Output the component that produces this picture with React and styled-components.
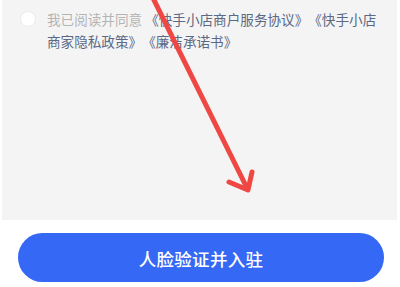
import React from "react"
import styled, { createGlobalStyle } from "styled-components"

const Global = createGlobalStyle`
  body {
    margin: 0;
    background: #fff;
    font-family: "Noto Sans CJK SC", "Noto Sans", sans-serif;
  }
`

const Page = styled.div`
  position: relative;
  width: 400px;
  height: 287px;
  overflow: hidden;
  background: #fff;
  display: flex;
  flex-direction: column;
`

const Panel = styled.div`
  height: 220px;
  margin: 0 3px 0 2px;
  padding: 9px 4px 0 18px;
  box-sizing: border-box;
  background: #f4f4f4;
`

const Agreement = styled.div`
  display: flex;
  align-items: flex-start;
  gap: 11px;
`

const Check = styled.span`
  flex: none;
  width: 16px;
  height: 16px;
  margin-top: 2px;
  border-radius: 50%;
  background: #fff;
  border: 1px solid #ebebeb;
  box-sizing: border-box;
`

const Text = styled.p`
  margin: 0;
  font-size: 13.6px;
  line-height: 21.5px;
  white-space: nowrap;
  text-spacing-trim: space-all;
  color: #b4b4b4;
`

const Link = styled.span`
  margin-left: ${p => (p.$gap ? "3px" : "0")};
  color: #5b6985;
`

const Footer = styled.div`
  padding: 13px 0 0 18px;
`

const Button = styled.button`
  width: 366px;
  height: 49px;
  border: none;
  border-radius: 25px;
  background: #3468f5;
  color: #fff;
  font-family: inherit;
  font-size: 17.5px;
  font-weight: 500;
  letter-spacing: 0.3px;
  padding: 2px 0 0;
`

const Overlay = styled.svg`
  position: absolute;
  top: 0;
  left: 0;
  pointer-events: none;
`

const Arrow = () => (
  <Overlay width="400" height="287" viewBox="0 0 400 287">
    <g stroke="#ef4844" strokeWidth="5" strokeLinecap="round" strokeLinejoin="round" fill="none">
      <line x1="151" y1="-6" x2="247" y2="188" />
      <polyline points="229,182 248,190 252,172" />
    </g>
  </Overlay>
)

export default function App() {
  return (
    <Page>
      <Global />
      <Panel>
        <Agreement>
          <Check />
          <Text>
            我已阅读并同意<Link $gap>《快手小店商户服务协议》《快手小店<br />商家隐私政策》《廉洁承诺书》</Link>
          </Text>
        </Agreement>
      </Panel>
      <Footer>
        <Button>人脸验证并入驻</Button>
      </Footer>
      <Arrow />
    </Page>
  )
}
